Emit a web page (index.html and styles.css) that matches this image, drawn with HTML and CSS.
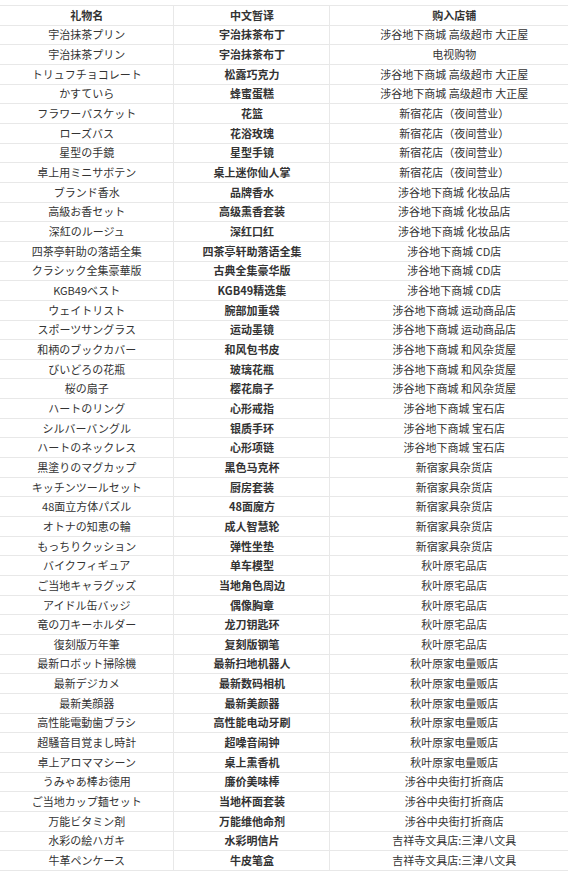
FILE: index.html
```html
<!DOCTYPE html>
<html lang="zh">
<head>
<meta charset="utf-8">
<title>礼物一览</title>
<link rel="stylesheet" href="styles.css">
</head>
<body>
<div class="gift-table">
  <div class="row head"><div class="cell">礼物名</div><div class="cell">中文暂译</div><div class="cell">购入店铺</div></div>
  <div class="row"><div class="cell">宇治抹茶プリン</div><div class="cell cn">宇治抹茶布丁</div><div class="cell">涉谷地下商城 高级超市 大正屋</div></div>
  <div class="row"><div class="cell">宇治抹茶プリン</div><div class="cell cn">宇治抹茶布丁</div><div class="cell">电视购物</div></div>
  <div class="row"><div class="cell">トリュフチョコレート</div><div class="cell cn">松露巧克力</div><div class="cell">涉谷地下商城 高级超市 大正屋</div></div>
  <div class="row"><div class="cell">かすていら</div><div class="cell cn">蜂蜜蛋糕</div><div class="cell">涉谷地下商城 高级超市 大正屋</div></div>
  <div class="row"><div class="cell">フラワーバスケット</div><div class="cell cn">花篮</div><div class="cell">新宿花店（夜间营业）</div></div>
  <div class="row"><div class="cell">ローズバス</div><div class="cell cn">花浴玫瑰</div><div class="cell">新宿花店（夜间营业）</div></div>
  <div class="row"><div class="cell">星型の手鏡</div><div class="cell cn">星型手镜</div><div class="cell">新宿花店（夜间营业）</div></div>
  <div class="row"><div class="cell">卓上用ミニサボテン</div><div class="cell cn">桌上迷你仙人掌</div><div class="cell">新宿花店（夜间营业）</div></div>
  <div class="row"><div class="cell">ブランド香水</div><div class="cell cn">品牌香水</div><div class="cell">涉谷地下商城 化妆品店</div></div>
  <div class="row"><div class="cell">高級お香セット</div><div class="cell cn">高级熏香套装</div><div class="cell">涉谷地下商城 化妆品店</div></div>
  <div class="row"><div class="cell">深紅のルージュ</div><div class="cell cn">深红口红</div><div class="cell">涉谷地下商城 化妆品店</div></div>
  <div class="row"><div class="cell">四茶亭軒助の落語全集</div><div class="cell cn">四茶亭轩助落语全集</div><div class="cell">涉谷地下商城 CD店</div></div>
  <div class="row"><div class="cell">クラシック全集豪華版</div><div class="cell cn">古典全集豪华版</div><div class="cell">涉谷地下商城 CD店</div></div>
  <div class="row"><div class="cell">KGB49ベスト</div><div class="cell cn">KGB49精选集</div><div class="cell">涉谷地下商城 CD店</div></div>
  <div class="row"><div class="cell">ウェイトリスト</div><div class="cell cn">腕部加重袋</div><div class="cell">涉谷地下商城 运动商品店</div></div>
  <div class="row"><div class="cell">スポーツサングラス</div><div class="cell cn">运动墨镜</div><div class="cell">涉谷地下商城 运动商品店</div></div>
  <div class="row"><div class="cell">和柄のブックカバー</div><div class="cell cn">和风包书皮</div><div class="cell">涉谷地下商城 和风杂货屋</div></div>
  <div class="row"><div class="cell">びいどろの花瓶</div><div class="cell cn">玻璃花瓶</div><div class="cell">涉谷地下商城 和风杂货屋</div></div>
  <div class="row"><div class="cell">桜の扇子</div><div class="cell cn">樱花扇子</div><div class="cell">涉谷地下商城 和风杂货屋</div></div>
  <div class="row"><div class="cell">ハートのリング</div><div class="cell cn">心形戒指</div><div class="cell">涉谷地下商城 宝石店</div></div>
  <div class="row"><div class="cell">シルバーバングル</div><div class="cell cn">银质手环</div><div class="cell">涉谷地下商城 宝石店</div></div>
  <div class="row"><div class="cell">ハートのネックレス</div><div class="cell cn">心形项链</div><div class="cell">涉谷地下商城 宝石店</div></div>
  <div class="row"><div class="cell">黒塗りのマグカップ</div><div class="cell cn">黑色马克杯</div><div class="cell">新宿家具杂货店</div></div>
  <div class="row"><div class="cell">キッチンツールセット</div><div class="cell cn">厨房套装</div><div class="cell">新宿家具杂货店</div></div>
  <div class="row"><div class="cell">48面立方体パズル</div><div class="cell cn">48面魔方</div><div class="cell">新宿家具杂货店</div></div>
  <div class="row"><div class="cell">オトナの知恵の輪</div><div class="cell cn">成人智慧轮</div><div class="cell">新宿家具杂货店</div></div>
  <div class="row"><div class="cell">もっちりクッション</div><div class="cell cn">弹性坐垫</div><div class="cell">新宿家具杂货店</div></div>
  <div class="row"><div class="cell">バイクフィギュア</div><div class="cell cn">单车模型</div><div class="cell">秋叶原宅品店</div></div>
  <div class="row"><div class="cell">ご当地キャラグッズ</div><div class="cell cn">当地角色周边</div><div class="cell">秋叶原宅品店</div></div>
  <div class="row"><div class="cell">アイドル缶バッジ</div><div class="cell cn">偶像胸章</div><div class="cell">秋叶原宅品店</div></div>
  <div class="row"><div class="cell">竜の刀キーホルダー</div><div class="cell cn">龙刀钥匙环</div><div class="cell">秋叶原宅品店</div></div>
  <div class="row"><div class="cell">復刻版万年筆</div><div class="cell cn">复刻版钢笔</div><div class="cell">秋叶原宅品店</div></div>
  <div class="row"><div class="cell">最新ロボット掃除機</div><div class="cell cn">最新扫地机器人</div><div class="cell">秋叶原家电量贩店</div></div>
  <div class="row"><div class="cell">最新デジカメ</div><div class="cell cn">最新数码相机</div><div class="cell">秋叶原家电量贩店</div></div>
  <div class="row"><div class="cell">最新美顔器</div><div class="cell cn">最新美颜器</div><div class="cell">秋叶原家电量贩店</div></div>
  <div class="row"><div class="cell">高性能電動歯ブラシ</div><div class="cell cn">高性能电动牙刷</div><div class="cell">秋叶原家电量贩店</div></div>
  <div class="row"><div class="cell">超騒音目覚まし時計</div><div class="cell cn">超噪音闹钟</div><div class="cell">秋叶原家电量贩店</div></div>
  <div class="row"><div class="cell">卓上アロママシーン</div><div class="cell cn">桌上熏香机</div><div class="cell">秋叶原家电量贩店</div></div>
  <div class="row"><div class="cell">うみゃあ棒お徳用</div><div class="cell cn">廉价美味棒</div><div class="cell">涉谷中央街打折商店</div></div>
  <div class="row"><div class="cell">ご当地カップ麺セット</div><div class="cell cn">当地杯面套装</div><div class="cell">涉谷中央街打折商店</div></div>
  <div class="row"><div class="cell">万能ビタミン剤</div><div class="cell cn">万能维他命剂</div><div class="cell">涉谷中央街打折商店</div></div>
  <div class="row"><div class="cell">水彩の絵ハガキ</div><div class="cell cn">水彩明信片</div><div class="cell">吉祥寺文具店:三津八文具</div></div>
  <div class="row"><div class="cell">牛革ペンケース</div><div class="cell cn">牛皮笔盒</div><div class="cell">吉祥寺文具店:三津八文具</div></div>
</div>
</body>
</html>
```
FILE: styles.css
```css
html, body {
  margin: 0;
  padding: 0;
  background: #fff;
  overflow: hidden;
}
body {
  font-family: "Noto Sans CJK SC", "Noto Sans CJK JP", "Noto Sans", sans-serif;
  font-size: 11px;
  color: #333;
}
.gift-table {
  width: 578px;
  margin-top: 5px;
  border-top: 1px solid #e8e8e8;
}
.row {
  display: grid;
  grid-template-columns: 30% 27% 43%;
  height: 19.66px;
  box-sizing: border-box;
  border-bottom: 1px solid #e8e8e8;
}
.cell {
  display: flex;
  align-items: center;
  justify-content: center;
  white-space: nowrap;
  overflow: hidden;
  line-height: 1;
}
.cell + .cell {
  border-left: 1px solid #e8e8e8;
}
.head .cell,
.cell.cn {
  font-weight: 700;
}
```
